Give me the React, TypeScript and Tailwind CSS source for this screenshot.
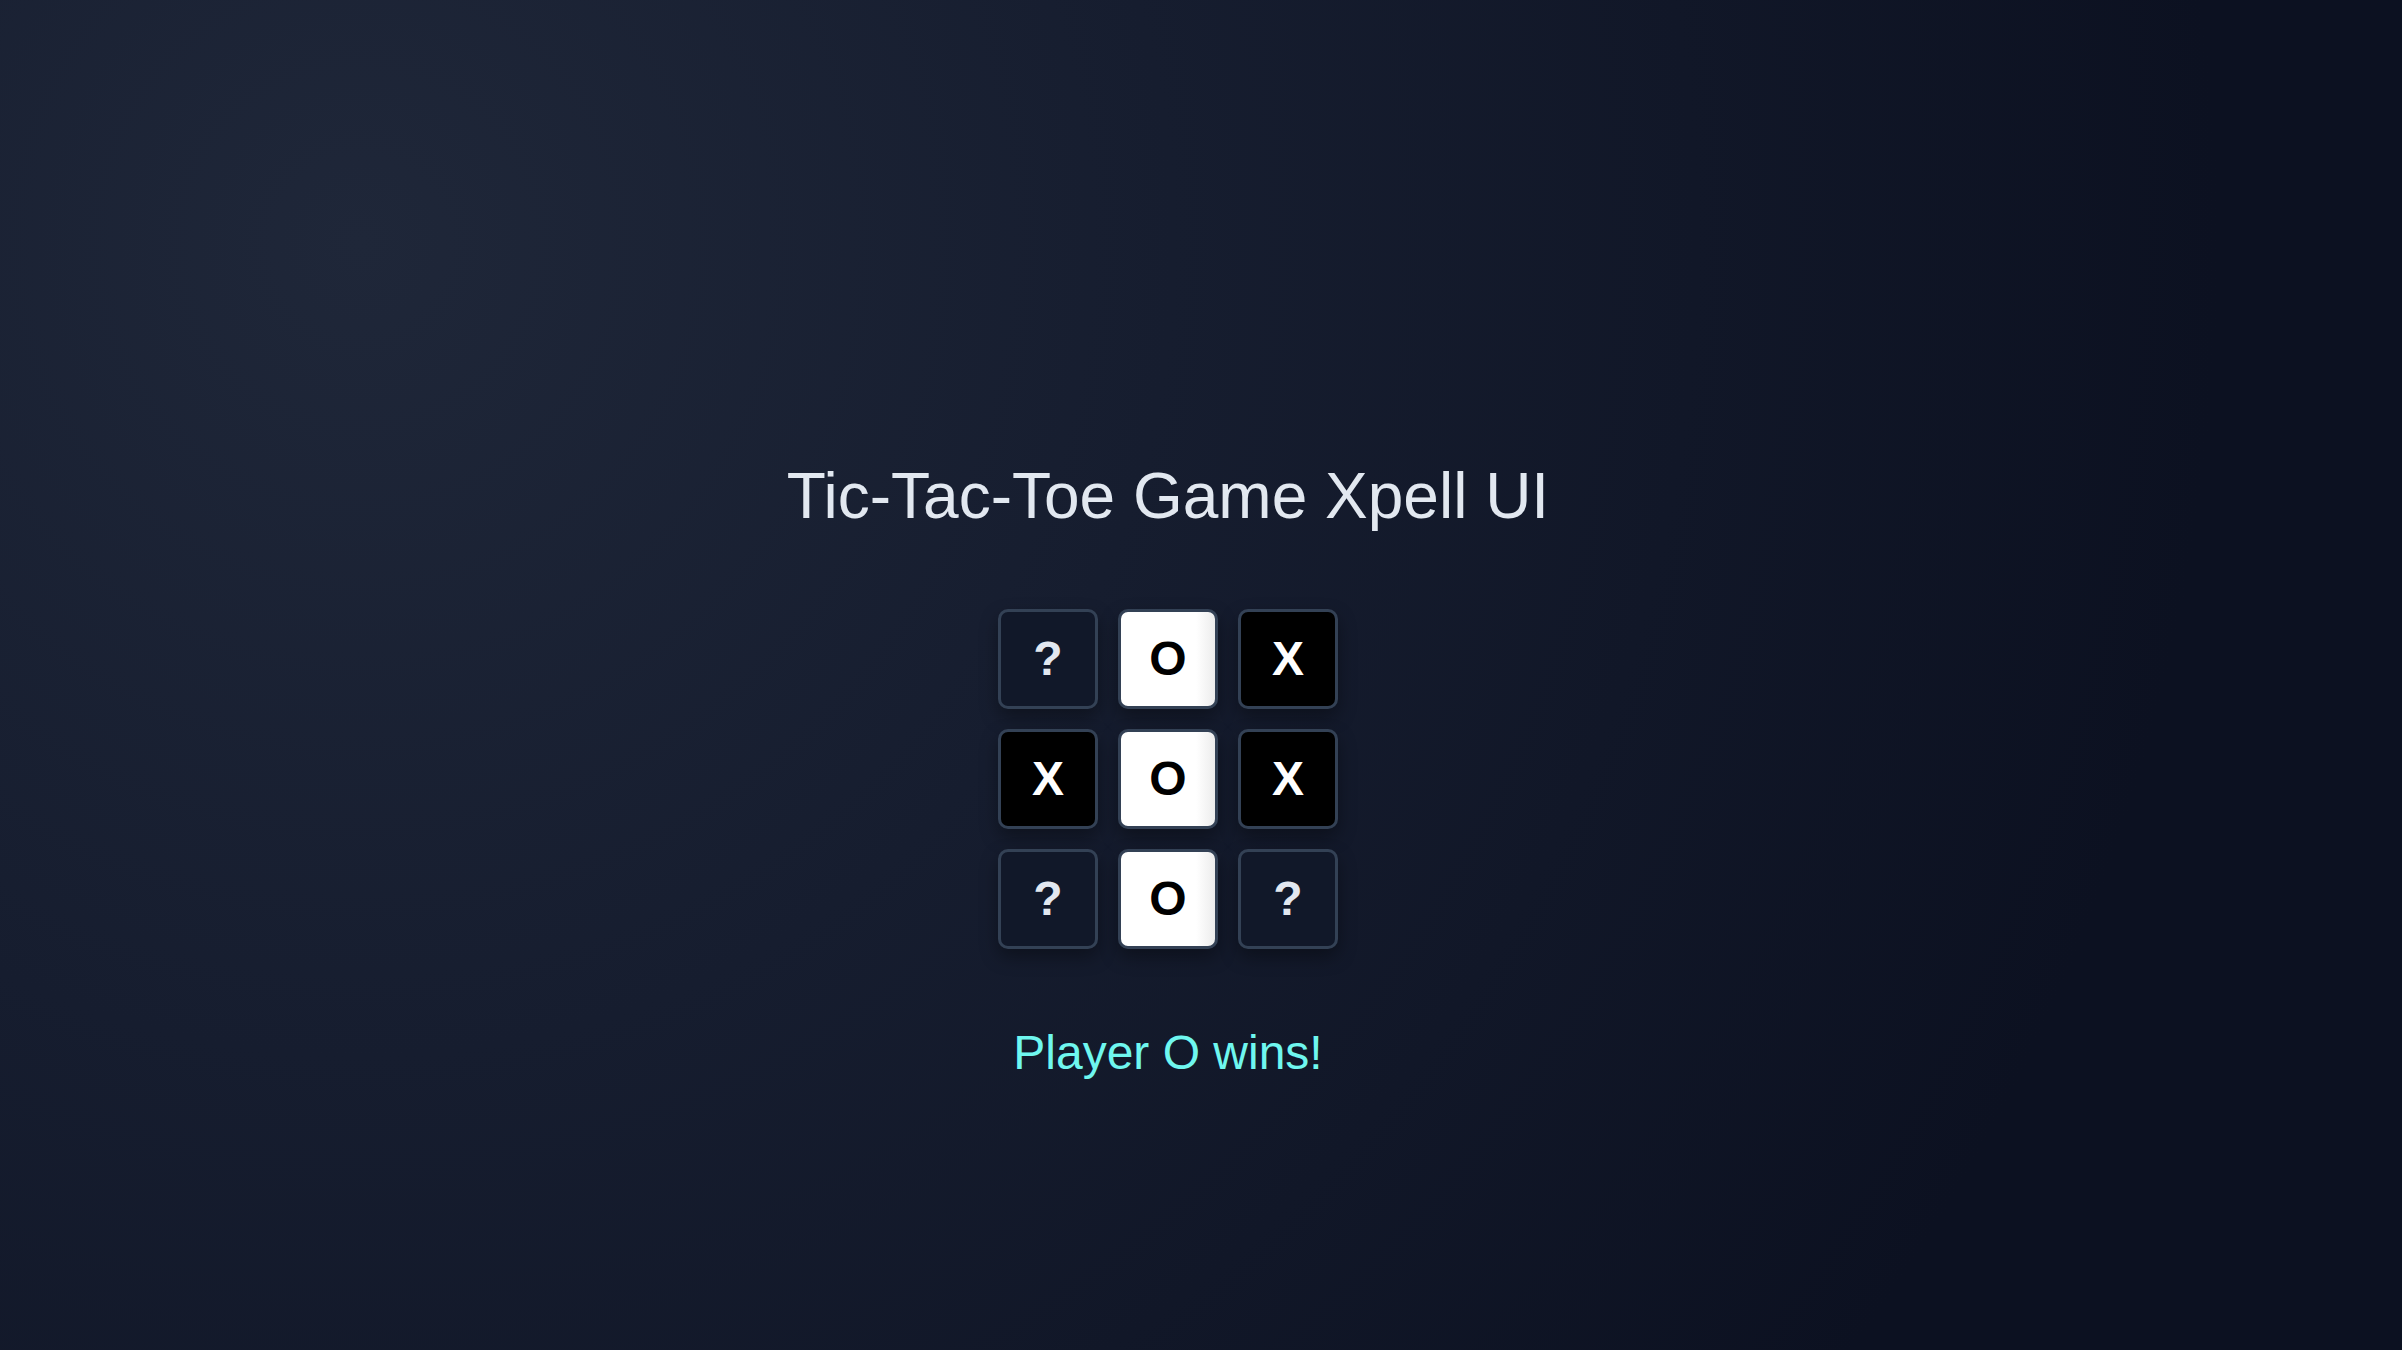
import React from 'react';

type Mark = 'X' | 'O' | null;

const board: Mark[] = [null, 'O', 'X', 'X', 'O', 'X', null, 'O', null];

function Cell({ value }: { value: Mark }) {
  const base =
    'w-[100px] h-[100px] rounded-[10px] border-[3px] border-[#334155] flex items-center justify-center text-[48px] font-bold leading-none shadow-[0_8px_18px_rgba(0,0,0,0.35)]';

  if (value === 'O') {
    return <div className={`${base} bg-gradient-to-r from-white from-80% to-[#ececec] text-black`}>O</div>;
  }
  if (value === 'X') {
    return <div className={`${base} bg-black text-white`}>X</div>;
  }
  return <div className={`${base} bg-[#111829] text-[#e2e8f0]`}>?</div>;
}

export default function App() {
  return (
    <div
      className="min-h-screen w-full bg-[radial-gradient(circle_at_15%_18%,#1f2739_0%,#161d2f_35%,#0c1121_80%)] flex flex-col items-center pt-[464px] pr-[66px]"
      style={{ fontFamily: '"Liberation Sans", Arial, sans-serif' }}
    >
      <h1 className="text-[64px] leading-none font-normal text-[#e2e8f0]">Tic-Tac-Toe Game Xpell UI</h1>

      <div className="mt-[81px] grid grid-cols-3 gap-[20px]">
        {board.map((v, i) => (
          <Cell key={i} value={v} />
        ))}
      </div>

      <p className="mt-[80px] text-[48px] leading-none text-[#6ff7ef]">Player O wins!</p>
    </div>
  );
}
